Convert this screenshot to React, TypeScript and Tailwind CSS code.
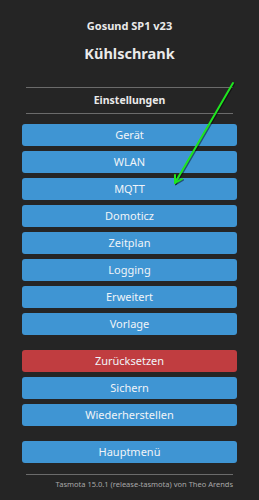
import React from 'react';

const groups: { label: string; red?: boolean }[][] = [
  [
    { label: 'Gerät' },
    { label: 'WLAN' },
    { label: 'MQTT' },
    { label: 'Domoticz' },
    { label: 'Zeitplan' },
    { label: 'Logging' },
    { label: 'Erweitert' },
    { label: 'Vorlage' },
  ],
  [{ label: 'Zurücksetzen', red: true }, { label: 'Sichern' }, { label: 'Wiederherstellen' }],
  [{ label: 'Hauptmenü' }],
];

const MenuButton: React.FC<{ label: string; red?: boolean }> = ({ label, red }) => (
  <button
    className={`w-full h-[22px] rounded-[3px] text-[11px] leading-[22px] text-[#f0f4f8] ${
      red ? 'bg-[#c03d40]' : 'bg-[#3f95d3]'
    }`}
  >
    {label}
  </button>
);

// green annotation arrow drawn on top of the screenshot
const Arrow = () => (
  <svg className="absolute left-0 top-0 pointer-events-none" width="259" height="500" viewBox="0 0 259 500">
    <g stroke="rgba(0,0,0,0.45)" strokeWidth="2" fill="none" strokeLinecap="round">
      <line x1="234" y1="84" x2="176" y2="184" />
      <polyline points="176,176 176,184 183,180" />
    </g>
    <g stroke="#1ee61e" strokeWidth="2" fill="none" strokeLinecap="round" strokeLinejoin="round">
      <line x1="233" y1="83" x2="175" y2="183" />
      <polyline points="175,175 175,183 182,179" />
    </g>
  </svg>
);

export default function App() {
  return (
    <div className="relative w-[259px] h-[500px] bg-[#252525] text-[#eaeaea] font-['Noto_Sans',sans-serif] overflow-hidden">
      <div className="w-[215px] mx-auto flex flex-col">
        <div className="pt-[18px] text-center text-[11px] leading-[15px] font-bold">Gosund SP1 v23</div>
        <div className="mt-[10px] text-center text-[14.5px] leading-[20px] font-bold">Kühlschrank</div>

        <div className="mt-[24px] mx-[4px] h-px bg-[#6b6b6b]" />
        <div className="h-[25px] flex items-center justify-center text-[10.5px] font-bold">Einstellungen</div>
        <div className="mx-[4px] h-px bg-[#6b6b6b]" />

        <div className="mt-[10px] flex flex-col gap-[15px]">
          {groups.map((g, i) => (
            <div key={i} className="flex flex-col gap-[5px]">
              {g.map((b) => (
                <MenuButton key={b.label} label={b.label} red={b.red} />
              ))}
            </div>
          ))}
        </div>

        <div className="mt-[11px] mx-[4px] h-px bg-[#6b6b6b]" />
        <div className="mx-[4px] mt-[4px] text-right text-[7.5px] leading-[10px] text-[#a8a8a8]">
          Tasmota 15.0.1 (release-tasmota) von Theo Arends
        </div>
      </div>
      <Arrow />
    </div>
  );
}
